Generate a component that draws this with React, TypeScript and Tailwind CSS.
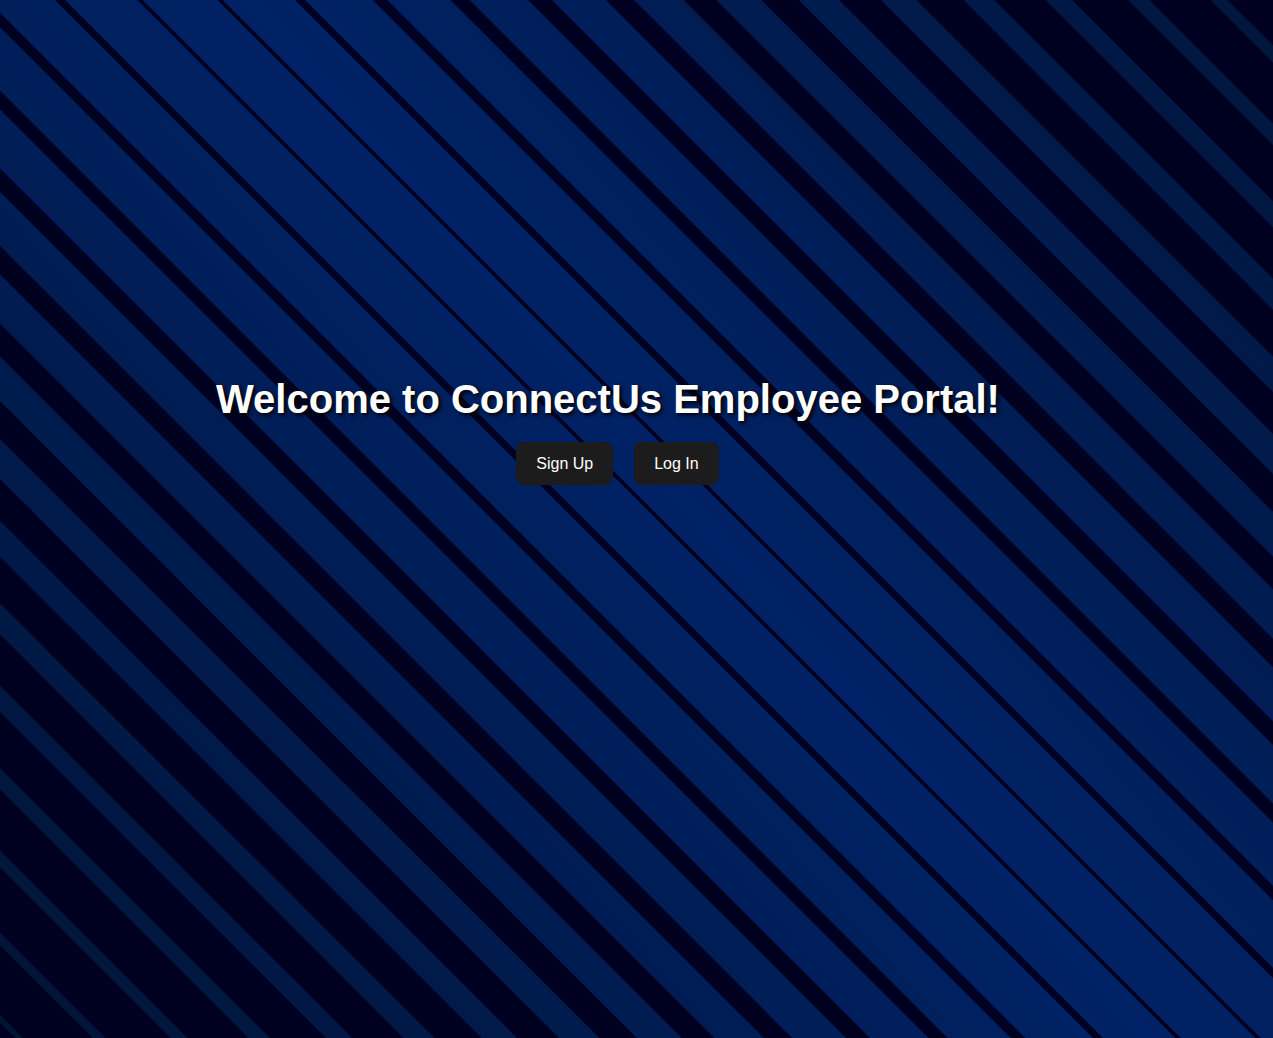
const W = 1273;
const H = 1038;

// dark diagonal stripes, thin along the middle and wider toward the corners
const stripes = Array.from({ length: 36 }, (_, i) => {
  const d = 60 + 80 * (i - 17);
  const w = 3 + 0.0575 * Math.abs(d - 180);
  const a = d - w / 2;
  const b = d + w / 2;
  return `${a - 100},-100 ${b - 100},-100 ${b + 1200},1200 ${a + 1200},1200`;
});

const Background = () => {
  return (
    <svg
      className="absolute inset-0 w-full h-full"
      viewBox={`0 0 ${W} ${H}`}
      preserveAspectRatio="none"
    >
      <defs>
        <linearGradient id="glow" gradientUnits="userSpaceOnUse" x1="43" y1="1089" x2="1357" y2="-51">
          <stop offset="0" stopColor="#001434" />
          <stop offset="0.5" stopColor="#002266" />
          <stop offset="1" stopColor="#001434" />
        </linearGradient>
      </defs>
      <rect width={W} height={H} fill="url(#glow)" />
      {stripes.map((p, i) => (
        <polygon key={i} points={p} fill="#000020" />
      ))}
    </svg>
  );
};

const Button = ({ label }: { label: string }) => {
  return (
    <button className="px-5 py-3 rounded-lg bg-[#1c1c1c] text-white text-base leading-[19px]">
      {label}
    </button>
  );
};

export default function App() {
  return (
    <div className="relative h-screen overflow-hidden bg-[#000020] font-['Liberation_Sans',Arial,sans-serif]">
      <Background />
      <div className="relative flex flex-col items-center pt-[376px]">
        <h1 className="mr-[57px] mb-5 text-[40px] leading-[46px] font-bold text-white [text-shadow:2px_2px_4px_#000]">
          Welcome to ConnectUs Employee Portal!
        </h1>
        <div className="flex gap-[21px] mr-[38px]">
          <Button label="Sign Up" />
          <Button label="Log In" />
        </div>
      </div>
    </div>
  );
}
